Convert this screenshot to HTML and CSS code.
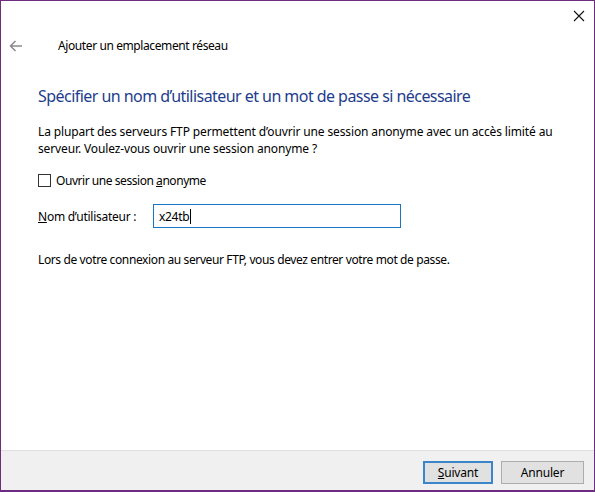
FILE: index.html
```html
<!DOCTYPE html>
<html lang="fr">
<head>
<meta charset="utf-8">
<title>Ajouter un emplacement réseau</title>
<link rel="stylesheet" href="styles.css">
</head>
<body>
<div class="window">
  <div class="topbar">
    <svg class="close" width="12" height="12" viewBox="0 0 12 12"><path d="M1 1 L11 11 M11 1 L1 11" stroke="#111" stroke-width="1.1" fill="none"/></svg>
  </div>
  <div class="nav">
    <svg class="back" width="14" height="12" viewBox="0 0 14 12"><path d="M13 6 H1.5 M6.5 1 L1.5 6 L6.5 11" stroke="#8a8a8a" stroke-width="1.5" fill="none"/></svg>
    <span class="nav-title">Ajouter un emplacement réseau</span>
  </div>
  <div class="content">
    <h1 class="instruction">Spécifier un nom d’utilisateur et un mot de passe si nécessaire</h1>
    <p class="text">La plupart des serveurs FTP permettent d’ouvrir une session anonyme avec un accès limité au<br>serveur. Voulez-vous ouvrir une session anonyme ?</p>
    <label class="check-row"><span class="checkbox"></span><span class="check-label">Ouvrir une session <u>a</u>nonyme</span></label>
    <div class="field-row">
      <span class="field-label"><u>N</u>om d’utilisateur :</span>
      <div class="input"><span>x24tb</span><span class="caret"></span></div>
    </div>
    <p class="text note">Lors de votre connexion au serveur FTP, vous devez entrer votre mot de passe.</p>
  </div>
  <div class="footer">
    <div class="btn btn-default"><u>S</u>uivant</div>
    <div class="btn">Annuler</div>
  </div>
</div>
</body>
</html>
```
FILE: styles.css
```css
html, body {
  margin: 0;
  padding: 0;
  background: #fff;
}
body {
  font-family: "Noto Sans", "Open Sans", sans-serif;
  font-size: 12px;
  color: #000;
}
.window {
  width: 595px;
  height: 492px;
  box-sizing: border-box;
  border: 1px solid #6e2c81;
  border-bottom-width: 2px;
  display: flex;
  flex-direction: column;
  background: #fff;
}
.topbar {
  height: 29px;
  display: flex;
  justify-content: flex-end;
  align-items: center;
  padding-right: 9px;
}
.close {
  display: block;
}
.nav {
  height: 32px;
  display: flex;
  align-items: center;
  padding-left: 8px;
}
.back {
  display: block;
  margin-right: 35px;
}
.nav-title {
  line-height: 32px;
  letter-spacing: -0.4px;
}
.content {
  padding-left: 37px;
}
.instruction {
  margin: 23px 0 0;
  font-size: 16px;
  font-weight: normal;
  line-height: 22px;
  color: #1e3c8c;
  letter-spacing: -0.55px;
}
.text {
  margin: 16px 0 0;
  line-height: 17px;
  letter-spacing: -0.13px;
}
.check-row {
  margin-top: 15px;
  display: flex;
  align-items: center;
  height: 17px;
}
.check-label {
  letter-spacing: -0.45px;
}
.checkbox {
  width: 11px;
  height: 11px;
  border: 1px solid #333;
  background: #fff;
  margin-right: 5px;
}
.field-row {
  margin-top: 15px;
  display: flex;
  align-items: center;
}
.field-label {
  width: 115px;
  letter-spacing: -0.26px;
}
.input {
  width: 241px;
  height: 22px;
  border: 1px solid #1a74c4;
  display: flex;
  align-items: center;
  padding-left: 5px;
  box-sizing: content-box;
  letter-spacing: -0.3px;
}
.caret {
  width: 1px;
  height: 15px;
  background: #000;
  margin-left: 1px;
}
.note {
  margin-top: 23px;
  letter-spacing: -0.38px;
}
.footer {
  margin-top: auto;
  border-top: 1px solid #dfdfdf;
  background: #f0f0f0;
  height: 40px;
  display: flex;
  justify-content: flex-end;
  align-items: flex-start;
  padding: 10px 10px 0 0;
  box-sizing: border-box;
  gap: 8px;
}
.btn {
  box-sizing: border-box;
  height: 23px;
  width: 83px;
  border: 1px solid #adadad;
  background: #e1e1e1;
  display: flex;
  align-items: center;
  justify-content: center;
  letter-spacing: -0.2px;
}
.btn-default {
  width: 70px;
  border: 2px solid #3b86c9;
}
```
